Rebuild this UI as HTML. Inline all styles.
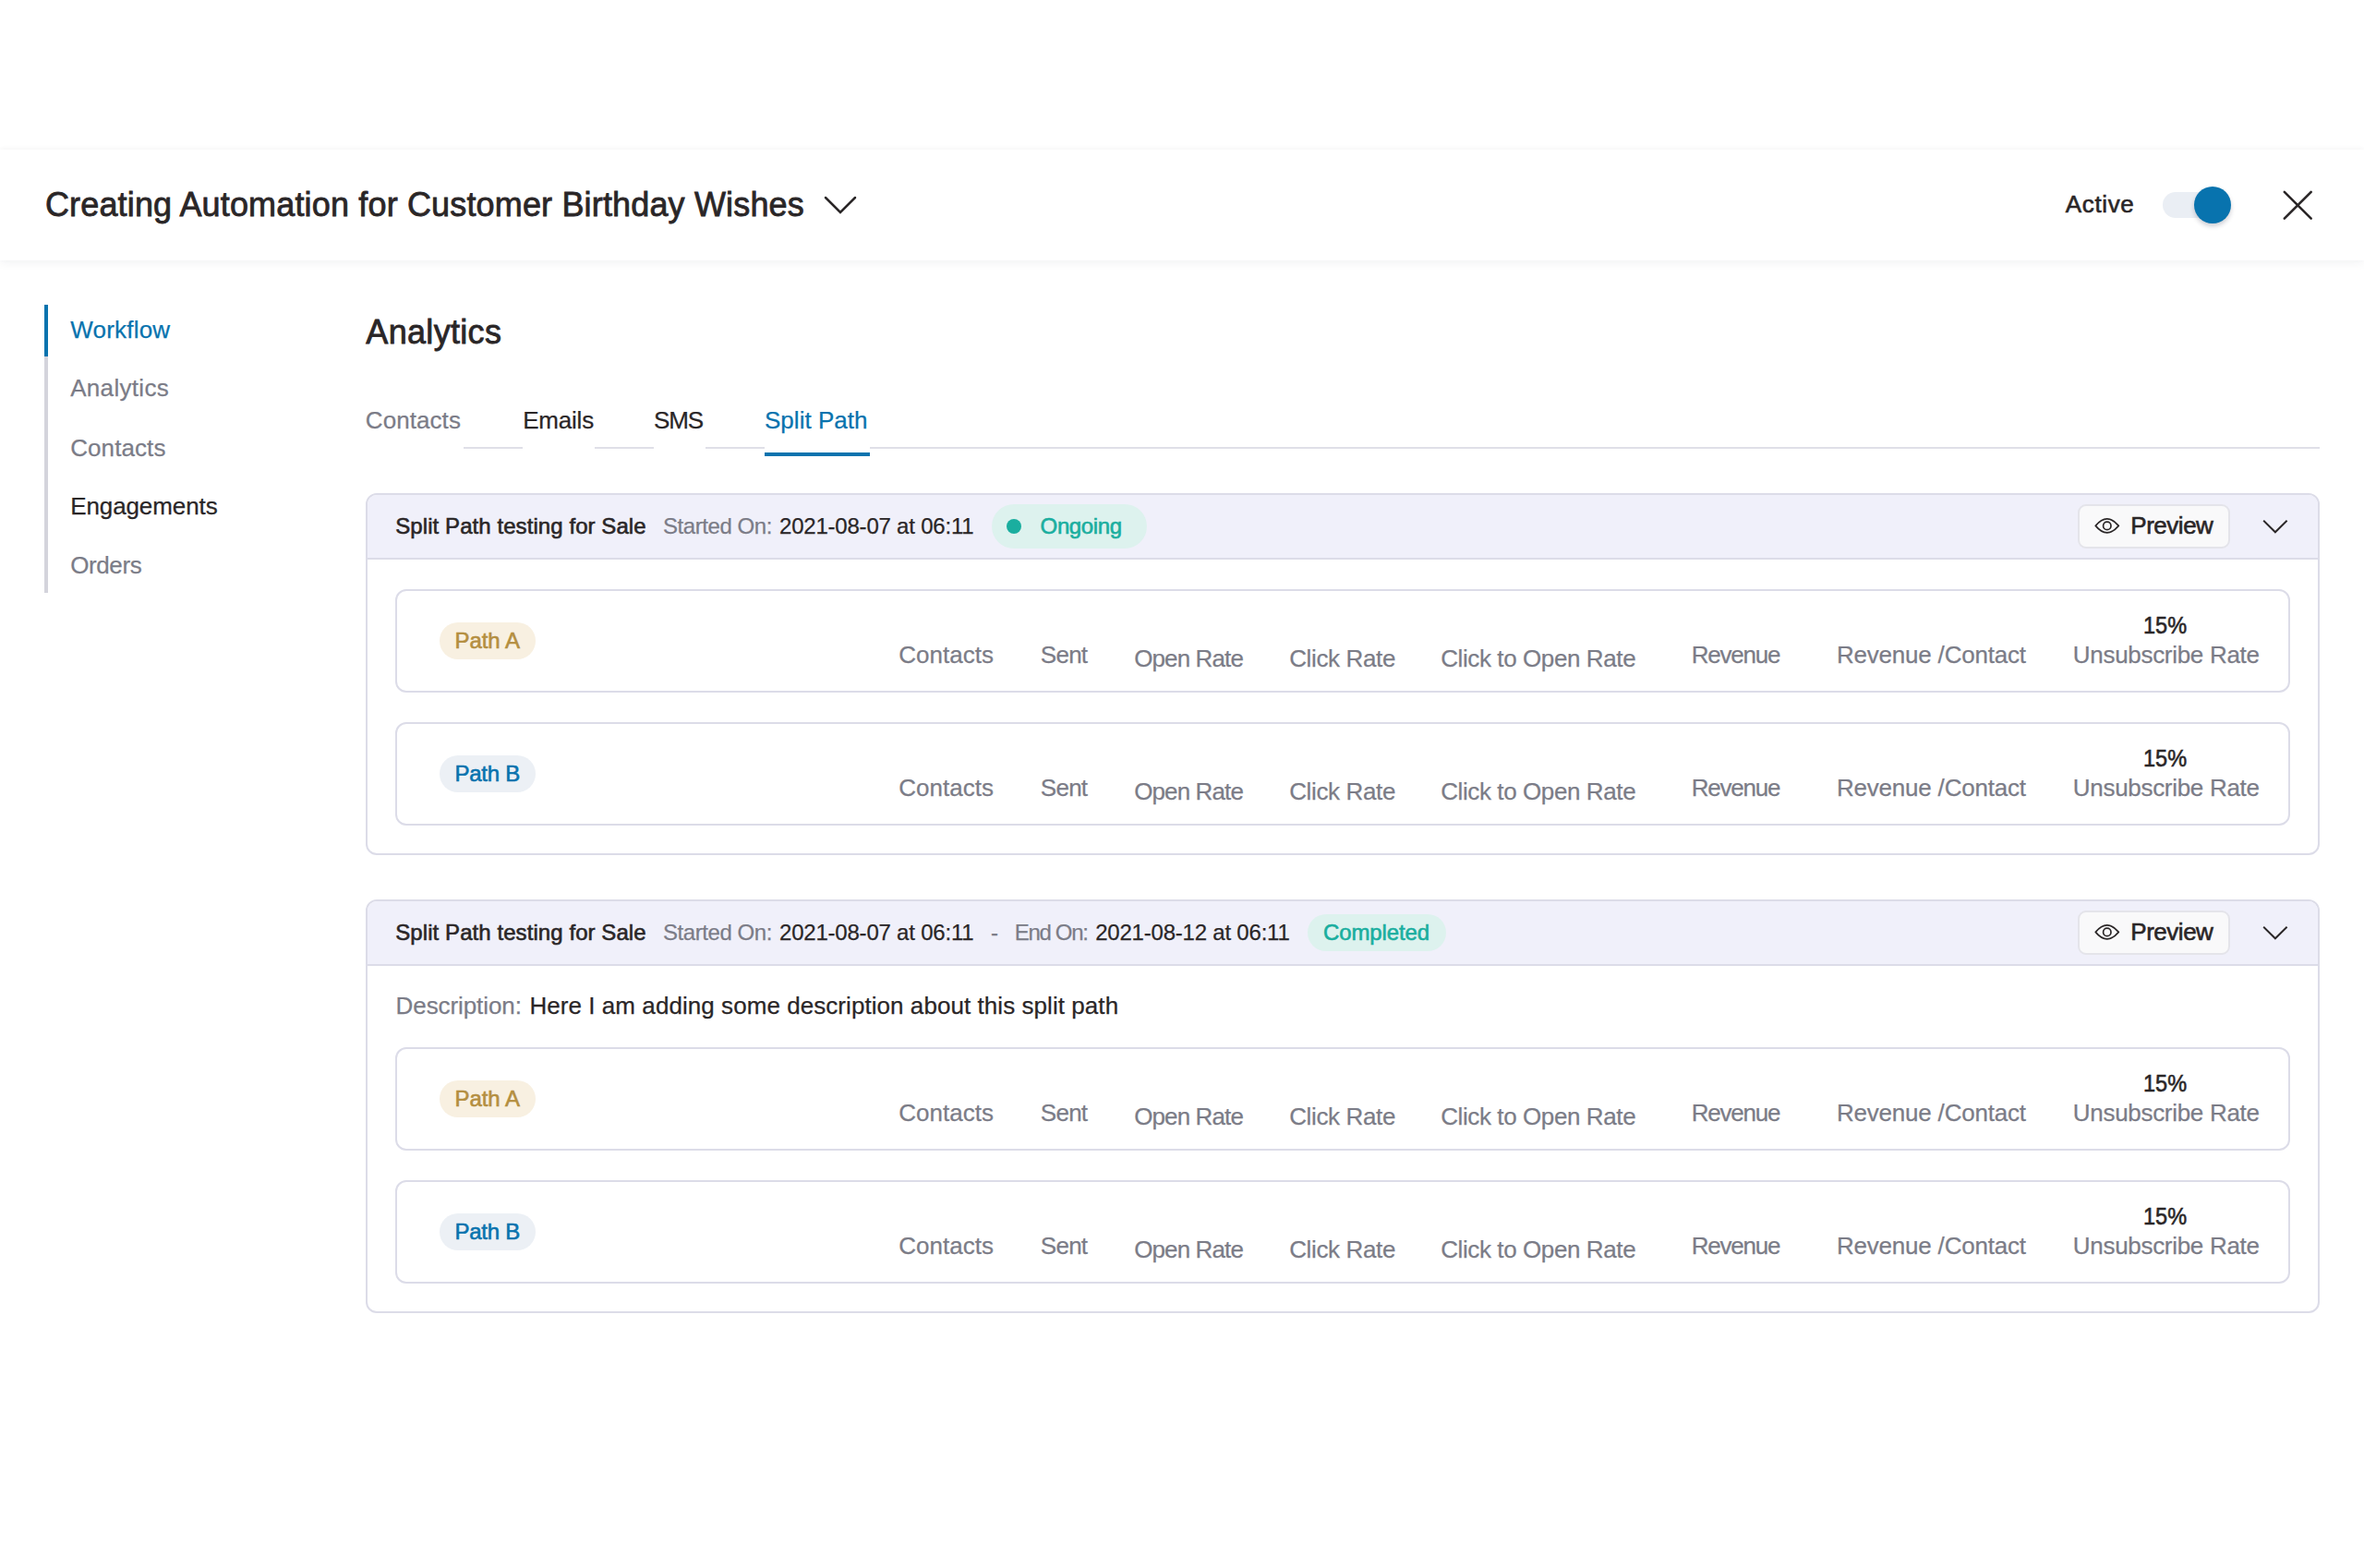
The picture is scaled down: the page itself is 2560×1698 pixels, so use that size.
<!DOCTYPE html>
<html><head><meta charset="utf-8">
<style>
*{margin:0;padding:0;box-sizing:border-box}
html,body{width:2560px;height:1698px;overflow:hidden;background:#fff}
body{position:relative;font-family:"Liberation Sans",sans-serif;color:#2a2627}
.t{position:absolute;line-height:1;white-space:nowrap}
.m{-webkit-text-stroke:0.6px currentColor}
.hdr{position:absolute;left:0;top:162px;width:2560px;height:120px;background:#fff;box-shadow:0 3px 10px rgba(20,30,60,0.05),0 -1px 6px rgba(20,30,60,0.03)}
.side{position:absolute;left:48px;top:330px;width:4px;height:312px;background:#d4d4dc}
.side i{position:absolute;left:0;top:0;width:4px;height:56px;background:#0873ae}
.tabline{position:absolute;left:396px;top:484px;width:2116px;height:2px;background:#dfdfe8}
.tabcover{position:absolute;top:470px;height:24px;background:#fff}
.card{position:absolute;left:396px;width:2116px;border:2px solid #dcdce8;border-radius:12px;overflow:hidden;background:#fff}
.ch{position:absolute;left:0;top:0;width:100%;height:70px;background:#f0f0fa;border-bottom:2px solid #dcdce8}
.path{position:absolute;left:428px;width:2052px;height:112px;border:2px solid #dcdce8;border-radius:12px;background:#fff}
.pill{position:absolute;border-radius:30px}
.btn{position:absolute;left:2250px;width:165px;height:48px;border:2px solid #e4e4ea;border-radius:9px;background:#f9f9fa}
svg{position:absolute}
</style></head><body>
<div class="hdr"></div>
<div class="t" style="left:48.9px;top:204px;font-size:36px;color:#2a2627;letter-spacing:0.16px;-webkit-text-stroke:0.8px #2a2627;">Creating Automation for Customer Birthday Wishes</div>
<svg style="left:892px;top:211px" width="36" height="22" viewBox="0 0 36 22"><polyline points="2,3 18,19 34,3" fill="none" stroke="#2a2627" stroke-width="2.5" stroke-linecap="round"/></svg>
<div class="t" style="left:2236.8px;top:208px;font-size:26px;color:#2a2627;letter-spacing:0.64px;-webkit-text-stroke:0.6px #2a2627;">Active</div>
<div style="position:absolute;left:2342px;top:208px;width:70px;height:28px;border-radius:14px;background:#eaeef4"></div>
<div style="position:absolute;left:2376px;top:202px;width:40px;height:40px;border-radius:20px;background:#0873ae;box-shadow:0 3px 5px rgba(30,30,60,0.22)"></div>
<svg style="left:2468px;top:202px" width="40" height="40" viewBox="0 0 40 40"><path d="M5.8 5.8 L34.7 34.7 M34.7 5.8 L5.8 34.7" fill="none" stroke="#2a2627" stroke-width="2.6" stroke-linecap="round"/></svg>
<div class="side"><i></i></div>
<div class="t" style="left:76.2px;top:344px;font-size:26px;color:#0873ae;letter-spacing:0.21px;-webkit-text-stroke:0.25px #0873ae;">Workflow</div>
<div class="t" style="left:76.2px;top:407px;font-size:26px;color:#7b7c87;letter-spacing:0.31px;-webkit-text-stroke:0.25px #7b7c87;">Analytics</div>
<div class="t" style="left:76.2px;top:472px;font-size:26px;color:#7b7c87;letter-spacing:0.09px;-webkit-text-stroke:0.25px #7b7c87;">Contacts</div>
<div class="t" style="left:76.2px;top:535px;font-size:26px;color:#2a2627;letter-spacing:-0.10px;-webkit-text-stroke:0.25px #2a2627;">Engagements</div>
<div class="t" style="left:76.2px;top:599px;font-size:26px;color:#7b7c87;letter-spacing:-0.40px;-webkit-text-stroke:0.25px #7b7c87;">Orders</div>
<div class="t" style="left:396.3px;top:342px;font-size:36px;color:#2a2627;letter-spacing:0.32px;-webkit-text-stroke:0.8px #2a2627;">Analytics</div>
<div class="tabline"></div>
<div class="tabcover" style="left:396px;width:106px"></div>
<div class="tabcover" style="left:566px;width:78px"></div>
<div class="tabcover" style="left:708px;width:56px"></div>
<div class="tabcover" style="left:828px;width:114px"></div>
<div style="position:absolute;left:828px;top:490px;width:114px;height:4px;background:#0873ae"></div>
<div class="t" style="left:395.8px;top:442px;font-size:26px;color:#7b7c87;letter-spacing:0.07px;-webkit-text-stroke:0.25px #7b7c87;">Contacts</div>
<div class="t" style="left:566.2px;top:442px;font-size:26px;color:#2a2627;letter-spacing:-0.20px;-webkit-text-stroke:0.25px #2a2627;">Emails</div>
<div class="t" style="left:708.0px;top:442px;font-size:26px;color:#2a2627;letter-spacing:-1.10px;-webkit-text-stroke:0.25px #2a2627;">SMS</div>
<div class="t" style="left:828.0px;top:442px;font-size:26px;color:#0873ae;letter-spacing:0.02px;-webkit-text-stroke:0.25px #0873ae;">Split Path</div>
<div class="card" style="top:534px;height:392px"><div class="ch"></div></div>
<div class="t" style="left:428.3px;top:558px;font-size:24px;color:#2a2627;letter-spacing:0.07px;-webkit-text-stroke:0.6px #2a2627;">Split Path testing for Sale</div>
<div class="t" style="left:718.0px;top:558px;font-size:24px;color:#7b7c87;letter-spacing:-0.44px;-webkit-text-stroke:0.25px #7b7c87;">Started On:</div>
<div class="t" style="left:844.0px;top:558px;font-size:24px;color:#2a2627;letter-spacing:-0.21px;-webkit-text-stroke:0.25px #2a2627;">2021-08-07 at 06:11</div>
<div class="pill" style="left:1074px;top:546px;width:168px;height:48px;background:#ddf2ee"></div>
<div style="position:absolute;left:1090px;top:562px;width:16px;height:16px;border-radius:8px;background:#1aae9f"></div>
<div class="t" style="left:1126.6px;top:558px;font-size:24px;color:#1aae9f;letter-spacing:-0.38px;-webkit-text-stroke:0.6px #1aae9f;">Ongoing</div>
<div class="btn" style="top:546px"></div>
<svg style="left:2260px;top:550px" width="44" height="40" viewBox="0 0 44 40"><path d="M9.3 19.4 Q21.8 4.4 34.3 19.4 Q21.8 34.4 9.3 19.4 Z" fill="none" stroke="#2a2627" stroke-width="1.7" stroke-linejoin="round"/><circle cx="21.8" cy="19.4" r="4.2" fill="none" stroke="#2a2627" stroke-width="1.7"/></svg>
<div class="t" style="left:2307.3px;top:556px;font-size:26px;color:#2a2627;letter-spacing:-0.48px;-webkit-text-stroke:0.6px #2a2627;">Preview</div>
<svg style="left:2449px;top:561px" width="30" height="19" viewBox="0 0 30 19"><polyline points="2.2,2.8 14.9,15.3 27.6,2.8" fill="none" stroke="#2a2627" stroke-width="1.9"/></svg>
<div class="path" style="top:638px"></div>
<div class="pill" style="left:476px;top:674px;width:104px;height:40px;background:#f8f0e1"></div>
<div class="t" style="left:492.4px;top:682px;font-size:24px;color:#b48e3f;letter-spacing:-0.02px;-webkit-text-stroke:0.6px #b48e3f;">Path A</div>
<div class="t" style="left:973.2px;top:696px;font-size:26px;color:#7b7c87;letter-spacing:0.03px;-webkit-text-stroke:0.25px #7b7c87;">Contacts</div>
<div class="t" style="left:1126.8px;top:696px;font-size:26px;color:#7b7c87;letter-spacing:-0.73px;-webkit-text-stroke:0.25px #7b7c87;">Sent</div>
<div class="t" style="left:1228.2px;top:700px;font-size:26px;color:#7b7c87;letter-spacing:-0.88px;-webkit-text-stroke:0.25px #7b7c87;">Open Rate</div>
<div class="t" style="left:1396.2px;top:700px;font-size:26px;color:#7b7c87;letter-spacing:-0.36px;-webkit-text-stroke:0.25px #7b7c87;">Click Rate</div>
<div class="t" style="left:1560.2px;top:700px;font-size:26px;color:#7b7c87;letter-spacing:-0.40px;-webkit-text-stroke:0.25px #7b7c87;">Click to Open Rate</div>
<div class="t" style="left:1831.8px;top:696px;font-size:26px;color:#7b7c87;letter-spacing:-1.23px;-webkit-text-stroke:0.25px #7b7c87;">Revenue</div>
<div class="t" style="left:1989.0px;top:696px;font-size:26px;color:#7b7c87;letter-spacing:-0.21px;-webkit-text-stroke:0.25px #7b7c87;">Revenue /Contact</div>
<div class="t" style="left:2244.8px;top:696px;font-size:26px;color:#7b7c87;letter-spacing:-0.30px;-webkit-text-stroke:0.25px #7b7c87;">Unsubscribe Rate</div>
<div class="t" style="left:2321.2px;top:664px;font-size:26px;color:#2a2627;-webkit-text-stroke:0.6px #2a2627;transform:scaleX(0.905);transform-origin:0 0;">15%</div>
<div class="path" style="top:782px"></div>
<div class="pill" style="left:476px;top:818px;width:104px;height:40px;background:#ecf0f5"></div>
<div class="t" style="left:492.4px;top:826px;font-size:24px;color:#0873ae;letter-spacing:-0.22px;-webkit-text-stroke:0.6px #0873ae;">Path B</div>
<div class="t" style="left:973.2px;top:840px;font-size:26px;color:#7b7c87;letter-spacing:0.03px;-webkit-text-stroke:0.25px #7b7c87;">Contacts</div>
<div class="t" style="left:1126.8px;top:840px;font-size:26px;color:#7b7c87;letter-spacing:-0.73px;-webkit-text-stroke:0.25px #7b7c87;">Sent</div>
<div class="t" style="left:1228.2px;top:844px;font-size:26px;color:#7b7c87;letter-spacing:-0.88px;-webkit-text-stroke:0.25px #7b7c87;">Open Rate</div>
<div class="t" style="left:1396.2px;top:844px;font-size:26px;color:#7b7c87;letter-spacing:-0.36px;-webkit-text-stroke:0.25px #7b7c87;">Click Rate</div>
<div class="t" style="left:1560.2px;top:844px;font-size:26px;color:#7b7c87;letter-spacing:-0.40px;-webkit-text-stroke:0.25px #7b7c87;">Click to Open Rate</div>
<div class="t" style="left:1831.8px;top:840px;font-size:26px;color:#7b7c87;letter-spacing:-1.23px;-webkit-text-stroke:0.25px #7b7c87;">Revenue</div>
<div class="t" style="left:1989.0px;top:840px;font-size:26px;color:#7b7c87;letter-spacing:-0.21px;-webkit-text-stroke:0.25px #7b7c87;">Revenue /Contact</div>
<div class="t" style="left:2244.8px;top:840px;font-size:26px;color:#7b7c87;letter-spacing:-0.30px;-webkit-text-stroke:0.25px #7b7c87;">Unsubscribe Rate</div>
<div class="t" style="left:2321.2px;top:808px;font-size:26px;color:#2a2627;-webkit-text-stroke:0.6px #2a2627;transform:scaleX(0.905);transform-origin:0 0;">15%</div>
<div class="card" style="top:974px;height:448px"><div class="ch"></div></div>
<div class="t" style="left:428.3px;top:998px;font-size:24px;color:#2a2627;letter-spacing:0.07px;-webkit-text-stroke:0.6px #2a2627;">Split Path testing for Sale</div>
<div class="t" style="left:718.0px;top:998px;font-size:24px;color:#7b7c87;letter-spacing:-0.44px;-webkit-text-stroke:0.25px #7b7c87;">Started On:</div>
<div class="t" style="left:844.0px;top:998px;font-size:24px;color:#2a2627;letter-spacing:-0.21px;-webkit-text-stroke:0.25px #2a2627;">2021-08-07 at 06:11</div>
<div class="t" style="left:1073.0px;top:998px;font-size:24px;color:#7b7c87;-webkit-text-stroke:0.25px #7b7c87;">-</div>
<div class="t" style="left:1098.7px;top:998px;font-size:24px;color:#7b7c87;letter-spacing:-1.30px;-webkit-text-stroke:0.25px #7b7c87;">End On:</div>
<div class="t" style="left:1186.2px;top:998px;font-size:24px;color:#2a2627;letter-spacing:-0.21px;-webkit-text-stroke:0.25px #2a2627;">2021-08-12 at 06:11</div>
<div class="pill" style="left:1416px;top:990px;width:150px;height:40px;background:#ddf2ee"></div>
<div class="t" style="left:1433.0px;top:998px;font-size:24px;color:#1aae9f;letter-spacing:-0.11px;-webkit-text-stroke:0.6px #1aae9f;">Completed</div>
<div class="btn" style="top:986px"></div>
<svg style="left:2260px;top:990px" width="44" height="40" viewBox="0 0 44 40"><path d="M9.3 19.4 Q21.8 4.4 34.3 19.4 Q21.8 34.4 9.3 19.4 Z" fill="none" stroke="#2a2627" stroke-width="1.7" stroke-linejoin="round"/><circle cx="21.8" cy="19.4" r="4.2" fill="none" stroke="#2a2627" stroke-width="1.7"/></svg>
<div class="t" style="left:2307.3px;top:996px;font-size:26px;color:#2a2627;letter-spacing:-0.48px;-webkit-text-stroke:0.6px #2a2627;">Preview</div>
<svg style="left:2449px;top:1001px" width="30" height="19" viewBox="0 0 30 19"><polyline points="2.2,2.8 14.9,15.3 27.6,2.8" fill="none" stroke="#2a2627" stroke-width="1.9"/></svg>
<div class="t" style="left:428.6px;top:1076px;font-size:26px;color:#7b7c87;letter-spacing:-0.09px;-webkit-text-stroke:0.25px #7b7c87;">Description:</div>
<div class="t" style="left:573.4px;top:1076px;font-size:26px;color:#2a2627;letter-spacing:0.06px;-webkit-text-stroke:0.25px #2a2627;">Here I am adding some description about this split path</div>
<div class="path" style="top:1134px"></div>
<div class="pill" style="left:476px;top:1170px;width:104px;height:40px;background:#f8f0e1"></div>
<div class="t" style="left:492.4px;top:1178px;font-size:24px;color:#b48e3f;letter-spacing:-0.02px;-webkit-text-stroke:0.6px #b48e3f;">Path A</div>
<div class="t" style="left:973.2px;top:1192px;font-size:26px;color:#7b7c87;letter-spacing:0.03px;-webkit-text-stroke:0.25px #7b7c87;">Contacts</div>
<div class="t" style="left:1126.8px;top:1192px;font-size:26px;color:#7b7c87;letter-spacing:-0.73px;-webkit-text-stroke:0.25px #7b7c87;">Sent</div>
<div class="t" style="left:1228.2px;top:1196px;font-size:26px;color:#7b7c87;letter-spacing:-0.88px;-webkit-text-stroke:0.25px #7b7c87;">Open Rate</div>
<div class="t" style="left:1396.2px;top:1196px;font-size:26px;color:#7b7c87;letter-spacing:-0.36px;-webkit-text-stroke:0.25px #7b7c87;">Click Rate</div>
<div class="t" style="left:1560.2px;top:1196px;font-size:26px;color:#7b7c87;letter-spacing:-0.40px;-webkit-text-stroke:0.25px #7b7c87;">Click to Open Rate</div>
<div class="t" style="left:1831.8px;top:1192px;font-size:26px;color:#7b7c87;letter-spacing:-1.23px;-webkit-text-stroke:0.25px #7b7c87;">Revenue</div>
<div class="t" style="left:1989.0px;top:1192px;font-size:26px;color:#7b7c87;letter-spacing:-0.21px;-webkit-text-stroke:0.25px #7b7c87;">Revenue /Contact</div>
<div class="t" style="left:2244.8px;top:1192px;font-size:26px;color:#7b7c87;letter-spacing:-0.30px;-webkit-text-stroke:0.25px #7b7c87;">Unsubscribe Rate</div>
<div class="t" style="left:2321.2px;top:1160px;font-size:26px;color:#2a2627;-webkit-text-stroke:0.6px #2a2627;transform:scaleX(0.905);transform-origin:0 0;">15%</div>
<div class="path" style="top:1278px"></div>
<div class="pill" style="left:476px;top:1314px;width:104px;height:40px;background:#ecf0f5"></div>
<div class="t" style="left:492.4px;top:1322px;font-size:24px;color:#0873ae;letter-spacing:-0.22px;-webkit-text-stroke:0.6px #0873ae;">Path B</div>
<div class="t" style="left:973.2px;top:1336px;font-size:26px;color:#7b7c87;letter-spacing:0.03px;-webkit-text-stroke:0.25px #7b7c87;">Contacts</div>
<div class="t" style="left:1126.8px;top:1336px;font-size:26px;color:#7b7c87;letter-spacing:-0.73px;-webkit-text-stroke:0.25px #7b7c87;">Sent</div>
<div class="t" style="left:1228.2px;top:1340px;font-size:26px;color:#7b7c87;letter-spacing:-0.88px;-webkit-text-stroke:0.25px #7b7c87;">Open Rate</div>
<div class="t" style="left:1396.2px;top:1340px;font-size:26px;color:#7b7c87;letter-spacing:-0.36px;-webkit-text-stroke:0.25px #7b7c87;">Click Rate</div>
<div class="t" style="left:1560.2px;top:1340px;font-size:26px;color:#7b7c87;letter-spacing:-0.40px;-webkit-text-stroke:0.25px #7b7c87;">Click to Open Rate</div>
<div class="t" style="left:1831.8px;top:1336px;font-size:26px;color:#7b7c87;letter-spacing:-1.23px;-webkit-text-stroke:0.25px #7b7c87;">Revenue</div>
<div class="t" style="left:1989.0px;top:1336px;font-size:26px;color:#7b7c87;letter-spacing:-0.21px;-webkit-text-stroke:0.25px #7b7c87;">Revenue /Contact</div>
<div class="t" style="left:2244.8px;top:1336px;font-size:26px;color:#7b7c87;letter-spacing:-0.30px;-webkit-text-stroke:0.25px #7b7c87;">Unsubscribe Rate</div>
<div class="t" style="left:2321.2px;top:1304px;font-size:26px;color:#2a2627;-webkit-text-stroke:0.6px #2a2627;transform:scaleX(0.905);transform-origin:0 0;">15%</div>
</body></html>
